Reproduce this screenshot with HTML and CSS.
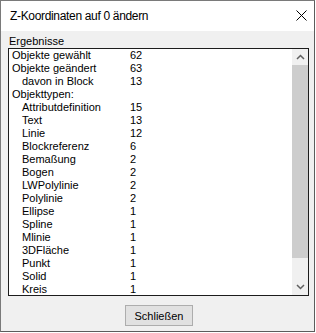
FILE: index.html
```html
<!DOCTYPE html>
<html lang="de">
<head>
<meta charset="utf-8">
<link rel="stylesheet" href="styles.css">
</head>
<body>
<div class="window">
  <div class="titlebar">
    <span class="title">Z-Koordinaten auf 0 ändern</span>
    <svg class="close" width="11" height="11" viewBox="0 0 11 11"><path d="M0.5 0.5 L10.5 10.5 M10.5 0.5 L0.5 10.5" stroke="#000" stroke-width="1" fill="none"/></svg>
  </div>
  <div class="body">
    <div class="label">Ergebnisse</div>
    <div class="listbox">
      <div class="items">
        <div class="row"><span>Objekte gewählt</span><span>62</span></div>
        <div class="row"><span>Objekte geändert</span><span>63</span></div>
        <div class="row sub"><span>davon in Block</span><span>13</span></div>
        <div class="row"><span>Objekttypen:</span><span></span></div>
        <div class="row sub"><span>Attributdefinition</span><span>15</span></div>
        <div class="row sub"><span>Text</span><span>13</span></div>
        <div class="row sub"><span>Linie</span><span>12</span></div>
        <div class="row sub"><span>Blockreferenz</span><span>6</span></div>
        <div class="row sub"><span>Bemaßung</span><span>2</span></div>
        <div class="row sub"><span>Bogen</span><span>2</span></div>
        <div class="row sub"><span>LWPolylinie</span><span>2</span></div>
        <div class="row sub"><span>Polylinie</span><span>2</span></div>
        <div class="row sub"><span>Ellipse</span><span>1</span></div>
        <div class="row sub"><span>Spline</span><span>1</span></div>
        <div class="row sub"><span>Mlinie</span><span>1</span></div>
        <div class="row sub"><span>3DFläche</span><span>1</span></div>
        <div class="row sub"><span>Punkt</span><span>1</span></div>
        <div class="row sub"><span>Solid</span><span>1</span></div>
        <div class="row sub"><span>Kreis</span><span>1</span></div>
      </div>
      <div class="scrollbar">
        <div class="arrow up"><svg width="9" height="6" viewBox="0 0 9 6"><path d="M1 5 L4.5 1.5 L8 5" stroke="#606060" stroke-width="1.5" fill="none"/></svg></div>
        <div class="track"><div class="thumb"></div></div>
        <div class="arrow down"><svg width="9" height="6" viewBox="0 0 9 6"><path d="M1 1 L4.5 4.5 L8 1" stroke="#606060" stroke-width="1.5" fill="none"/></svg></div>
      </div>
    </div>
    <div class="actions"><button class="btn">Schließen</button></div>
  </div>
</div>
</body>
</html>
```
FILE: styles.css
```css
html, body {
  margin: 0;
  padding: 0;
  background: #ffffff;
}
body {
  font-family: "Liberation Sans", Arial, sans-serif;
  font-size: 11px;
  color: #000;
}
.window {
  width: 315px;
  height: 332px;
  box-sizing: border-box;
  border: 1px solid #7a7a7a;
  border-right-color: #5c5c5c;
  border-bottom-color: #5c5c5c;
  display: flex;
  flex-direction: column;
  background: #f0f0f0;
}
.titlebar {
  height: 30px;
  flex: none;
  background: #ffffff;
  display: flex;
  align-items: center;
  padding-left: 9px;
  padding-right: 7px;
}
.title {
  flex: 1;
  font-size: 12px;
  line-height: 15px;
  letter-spacing: -0.33px;
  color: #000;
}
.close {
  display: block;
  margin-top: -1px;
}
.body {
  flex: 1;
  display: flex;
  flex-direction: column;
  padding: 4px 5px 0 7px;
}
.label {
  line-height: 13px;
  height: 13px;
  padding-left: 1px;
}
.listbox {
  height: 248px;
  box-sizing: border-box;
  border: 1px solid #1c1c1c;
  background: #fff;
  display: flex;
  overflow: hidden;
}
.items {
  flex: 1;
  overflow: hidden;
}
.row {
  display: grid;
  grid-template-columns: 118px 1fr;
  height: 13px;
  line-height: 13px;
  padding-left: 3px;
  white-space: nowrap;
}
.row.sub span:first-child {
  padding-left: 10px;
}
.row.sub {
  grid-template-columns: 118px 1fr;
}
.scrollbar {
  width: 16px;
  flex: none;
  background: #f0f0f0;
  display: flex;
  flex-direction: column;
}
.arrow {
  display: flex;
  align-items: center;
  justify-content: center;
  flex: none;
}
.arrow.up {
  height: 16px;
}
.arrow.down {
  height: 17px;
}
.track {
  flex: 1;
}
.thumb {
  height: 193px;
  background: #cdcdcd;
}
.actions {
  display: flex;
  justify-content: center;
  padding-top: 9px;
}
.btn {
  width: 68px;
  height: 21px;
  box-sizing: border-box;
  border: 1px solid #adadad;
  background: #e1e1e1;
  font-family: "Liberation Sans", Arial, sans-serif;
  font-size: 11px;
  color: #000;
  padding: 0;
  margin: 0 0 0 1px;
}
```
